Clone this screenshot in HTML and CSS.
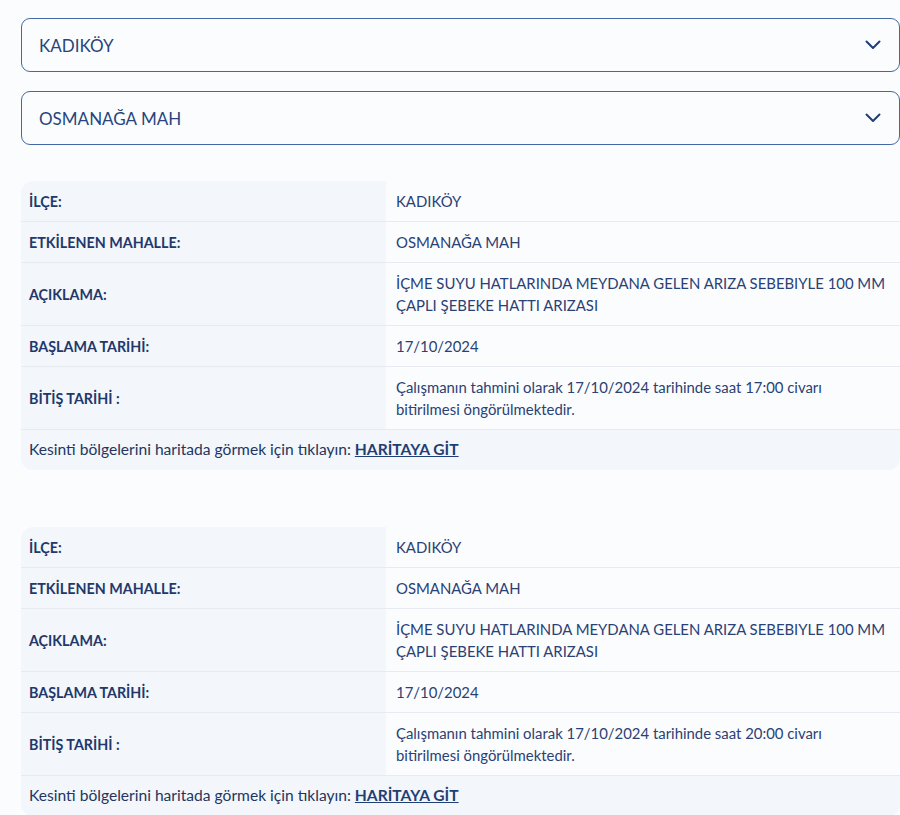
FILE: index.html
```html
<!DOCTYPE html>
<html lang="tr">
<head>
    <meta charset="UTF-8">
    <meta name="viewport" content="width=device-width, initial-scale=1.0">
    <title>Su Kesintileri</title>
    <link rel="stylesheet" href="styles.css">
</head>
<body>

    <div class="page">
        <!-- İlçe / mahalle seçimi -->
        <div class="select-box">
            <span>KADIKÖY</span>
            <svg class="chevron" width="16" height="10" viewBox="0 0 16 10"><path d="M1.5 1.5 L8 8 L14.5 1.5" fill="none" stroke="#1f3f75" stroke-width="2" stroke-linecap="round" stroke-linejoin="round"/></svg>
        </div>
        <div class="select-box">
            <span>OSMANAĞA MAH</span>
            <svg class="chevron" width="16" height="10" viewBox="0 0 16 10"><path d="M1.5 1.5 L8 8 L14.5 1.5" fill="none" stroke="#1f3f75" stroke-width="2" stroke-linecap="round" stroke-linejoin="round"/></svg>
        </div>

        <!-- Kesinti kartları -->
        <div class="outage-card">
            <div class="row">
                <div class="label">İLÇE:</div>
                <div class="value">KADIKÖY</div>
            </div>
            <div class="row">
                <div class="label">ETKİLENEN MAHALLE:</div>
                <div class="value">OSMANAĞA MAH</div>
            </div>
            <div class="row">
                <div class="label">AÇIKLAMA:</div>
                <div class="value">İÇME SUYU HATLARINDA MEYDANA GELEN ARIZA SEBEBIYLE 100 MM ÇAPLI ŞEBEKE HATTI ARIZASI</div>
            </div>
            <div class="row">
                <div class="label">BAŞLAMA TARİHİ:</div>
                <div class="value">17/10/2024</div>
            </div>
            <div class="row">
                <div class="label">BİTİŞ TARİHİ :</div>
                <div class="value">Çalışmanın tahmini olarak 17/10/2024 tarihinde saat 17:00 civarı bitirilmesi öngörülmektedir.</div>
            </div>
            <div class="card-footer">
                Kesinti bölgelerini haritada görmek için tıklayın: <a href="#">HARİTAYA GİT</a>
            </div>
        </div>

        <div class="outage-card">
            <div class="row">
                <div class="label">İLÇE:</div>
                <div class="value">KADIKÖY</div>
            </div>
            <div class="row">
                <div class="label">ETKİLENEN MAHALLE:</div>
                <div class="value">OSMANAĞA MAH</div>
            </div>
            <div class="row">
                <div class="label">AÇIKLAMA:</div>
                <div class="value">İÇME SUYU HATLARINDA MEYDANA GELEN ARIZA SEBEBIYLE 100 MM ÇAPLI ŞEBEKE HATTI ARIZASI</div>
            </div>
            <div class="row">
                <div class="label">BAŞLAMA TARİHİ:</div>
                <div class="value">17/10/2024</div>
            </div>
            <div class="row">
                <div class="label">BİTİŞ TARİHİ :</div>
                <div class="value">Çalışmanın tahmini olarak 17/10/2024 tarihinde saat 20:00 civarı bitirilmesi öngörülmektedir.</div>
            </div>
            <div class="card-footer">
                Kesinti bölgelerini haritada görmek için tıklayın: <a href="#">HARİTAYA GİT</a>
            </div>
        </div>
    </div>

</body>
</html>
```

FILE: styles.css
```css
body {
    font-family: Lato, 'Noto Sans', sans-serif;
    background-color: #fbfcfe;
    color: #23396a;
    margin: 0;
    overflow: hidden;
}

.page {
    padding: 18px 0 0 21px;
}

.select-box {
    height: 54px;
    box-sizing: border-box;
    border: 1.5px solid #4468a4;
    border-radius: 9px;
    display: flex;
    align-items: center;
    justify-content: space-between;
    padding: 0 18px 0 17px;
    font-size: 17px;
    color: #27457c;
    margin-bottom: 19px;
}

.chevron {
    display: block;
}

.outage-card {
    margin-top: 36px;
    margin-bottom: 57px;
    border-radius: 12px;
    overflow: hidden;
    font-size: 14.9px;
}

.row {
    display: flex;
    border-bottom: 1px solid #e7ebf1;
}

.label {
    width: 357px;
    flex-shrink: 0;
    background-color: #f3f6fb;
    padding: 0 0 0 8px;
    display: flex;
    align-items: center;
    font-weight: 700;
    font-size: 14.3px;
    color: #22386a;
}

.value {
    flex: 1;
    padding: 9px 13px 9px 10px;
    line-height: 22px;
    color: #2a4174;
}

.card-footer {
    background-color: #f3f6fb;
    padding: 10px 8px 11px;
    line-height: 19px;
    font-size: 15.6px;
    color: #23365f;
}

.card-footer a {
    color: #1f3f75;
    font-weight: 700;
    text-decoration: underline;
}
```
